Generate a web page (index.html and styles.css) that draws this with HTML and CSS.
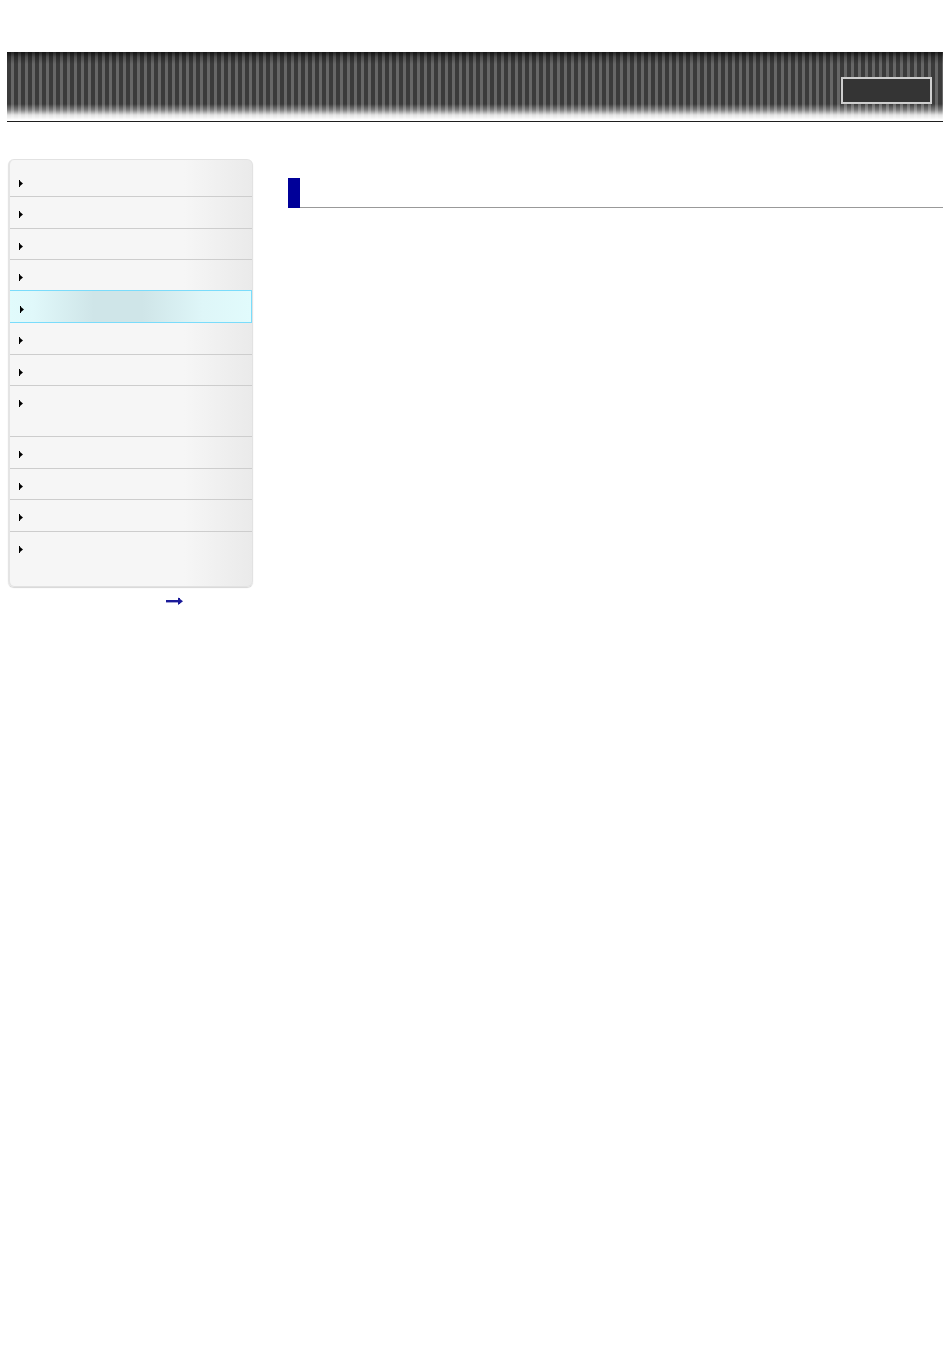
FILE: index.html
```html
<!DOCTYPE html>
<html lang="en">
<head>
<meta charset="utf-8">
<title>Help Guide</title>
<link rel="stylesheet" href="styles.css">
</head>
<body>
<header class="banner">
  <div class="banner-inner">
    <span class="banner-button"></span>
  </div>
</header>
<div class="layout">
  <aside class="side">
    <nav class="menu">
      <a class="item first" href="#"><svg class="bullet" viewBox="0 0 5 7"><rect x="0" y="0" width="1" height="7"/><polygon points="1,1 4,3.5 1,6"/></svg></a>
      <a class="item" href="#"><svg class="bullet" viewBox="0 0 5 7"><rect x="0" y="0" width="1" height="7"/><polygon points="1,1 4,3.5 1,6"/></svg></a>
      <a class="item" href="#"><svg class="bullet" viewBox="0 0 5 7"><rect x="0" y="0" width="1" height="7"/><polygon points="1,1 4,3.5 1,6"/></svg></a>
      <a class="item" href="#"><svg class="bullet" viewBox="0 0 5 7"><rect x="0" y="0" width="1" height="7"/><polygon points="1,1 4,3.5 1,6"/></svg></a>
      <a class="item active" href="#"><svg class="bullet" viewBox="0 0 5 7"><rect x="0" y="0" width="1" height="7"/><polygon points="1,1 4,3.5 1,6"/></svg></a>
      <a class="item" href="#"><svg class="bullet" viewBox="0 0 5 7"><rect x="0" y="0" width="1" height="7"/><polygon points="1,1 4,3.5 1,6"/></svg></a>
      <a class="item" href="#"><svg class="bullet" viewBox="0 0 5 7"><rect x="0" y="0" width="1" height="7"/><polygon points="1,1 4,3.5 1,6"/></svg></a>
      <a class="item tall" href="#"><svg class="bullet" viewBox="0 0 5 7"><rect x="0" y="0" width="1" height="7"/><polygon points="1,1 4,3.5 1,6"/></svg></a>
      <a class="item" href="#"><svg class="bullet" viewBox="0 0 5 7"><rect x="0" y="0" width="1" height="7"/><polygon points="1,1 4,3.5 1,6"/></svg></a>
      <a class="item" href="#"><svg class="bullet" viewBox="0 0 5 7"><rect x="0" y="0" width="1" height="7"/><polygon points="1,1 4,3.5 1,6"/></svg></a>
      <a class="item" href="#"><svg class="bullet" viewBox="0 0 5 7"><rect x="0" y="0" width="1" height="7"/><polygon points="1,1 4,3.5 1,6"/></svg></a>
      <a class="item last" href="#"><svg class="bullet" viewBox="0 0 5 7"><rect x="0" y="0" width="1" height="7"/><polygon points="1,1 4,3.5 1,6"/></svg></a>
    </nav>
    <div class="more">
      <a class="more-link" href="#"><svg viewBox="0 0 20 8" width="20" height="8"><rect x="0" y="3" width="13" height="2.4" fill="#1a1a99"/><polygon points="12,0.5 17,4.2 12,8" fill="#1a1a99"/><rect x="12" y="1" width="2" height="6" fill="#1a1a99"/></svg></a>
    </div>
  </aside>
  <main class="content">
    <h1 class="title"><span class="title-mark"></span></h1>
  </main>
</div>
</body>
</html>
```
FILE: styles.css
```css
html, body {
  margin: 0;
  padding: 0;
  background: #fff;
  font-family: "Liberation Sans", Arial, sans-serif;
  font-size: 12px;
}

.banner {
  margin: 52px 7px 0 7px;
  border-bottom: 1px solid #1e1e1e;
}

.banner-inner {
  height: 69px;
  display: flex;
  justify-content: flex-end;
  align-items: flex-start;
  background:
    linear-gradient(to bottom,
      rgba(0,0,0,0.65) 0px,
      rgba(0,0,0,0.25) 5px,
      rgba(0,0,0,0) 12px,
      rgba(0,0,0,0) 52px,
      rgba(255,255,255,0.35) 58px,
      rgba(255,255,255,0.85) 63px,
      #ffffff 68px),
    repeating-linear-gradient(to right,
      #3b3b3b 0px, #3b3b3b 4px,
      #676767 4px, #676767 7px);
}

.banner-button {
  display: block;
  width: 87px;
  height: 23px;
  margin: 25px 11px 0 0;
  border: 2px solid #cfcfcf;
  background: #343434;
}

.layout {
  display: flex;
  align-items: flex-start;
  margin-top: 37px;
}

.side {
  width: 245px;
  margin-left: 8px;
  flex: none;
}

.menu {
  display: flex;
  flex-direction: column;
  padding-top: 6px;
  padding-bottom: 0;
  border: 1px solid #e2e2e2;
  border-left: 2px solid #e4e4e4;
  border-radius: 6px;
  background: linear-gradient(to right, #f6f6f6 0%, #f6f6f6 72%, #eaeaea 100%);
  box-shadow: 0 1px 1px #d6d6d6;
  overflow: hidden;
}

.item {
  display: block;
  flex: none;
  height: 31.5px;
  padding-left: 9px;
  padding-top: 14px;
  box-sizing: border-box;
  border-bottom: 1px solid #cdcdcd;
  text-decoration: none;
}

.item.first {
  height: 31px;
  padding-top: 14px;
}

.item.tall {
  height: 51px;
  padding-top: 14px;
}

.item.last {
  height: 54px;
  border-bottom: none;
  padding-top: 14px;
}

.item.active {
  margin-top: -1.5px;
  margin-left: -2px;
  padding-left: 11px;
  height: 33px;
  padding-top: 15px;
  border: 1px solid #7adcfb;
  background: linear-gradient(to right, #e1fbfc 0%, #e0f8fa 10%, #cfe5e8 35%, #cfe5e8 55%, #def6f8 80%, #e1fbfc 100%);
}

.bullet {
  display: block;
  width: 5px;
  height: 7px;
  fill: #000;
}

.more {
  display: flex;
  justify-content: flex-start;
  padding-left: 158px;
  padding-top: 10px;
}

.more-link {
  display: block;
  width: 20px;
  height: 8px;
}

.more-link svg {
  display: block;
}

.content {
  flex: 1;
  margin-left: 35px;
  margin-right: 7px;
  padding-top: 19px;
}

.title {
  margin: 0;
  height: 29px;
  display: flex;
  border-bottom: 1px solid #999;
}

.title-mark {
  display: block;
  width: 12px;
  height: 30px;
  background: #000099;
}
```
